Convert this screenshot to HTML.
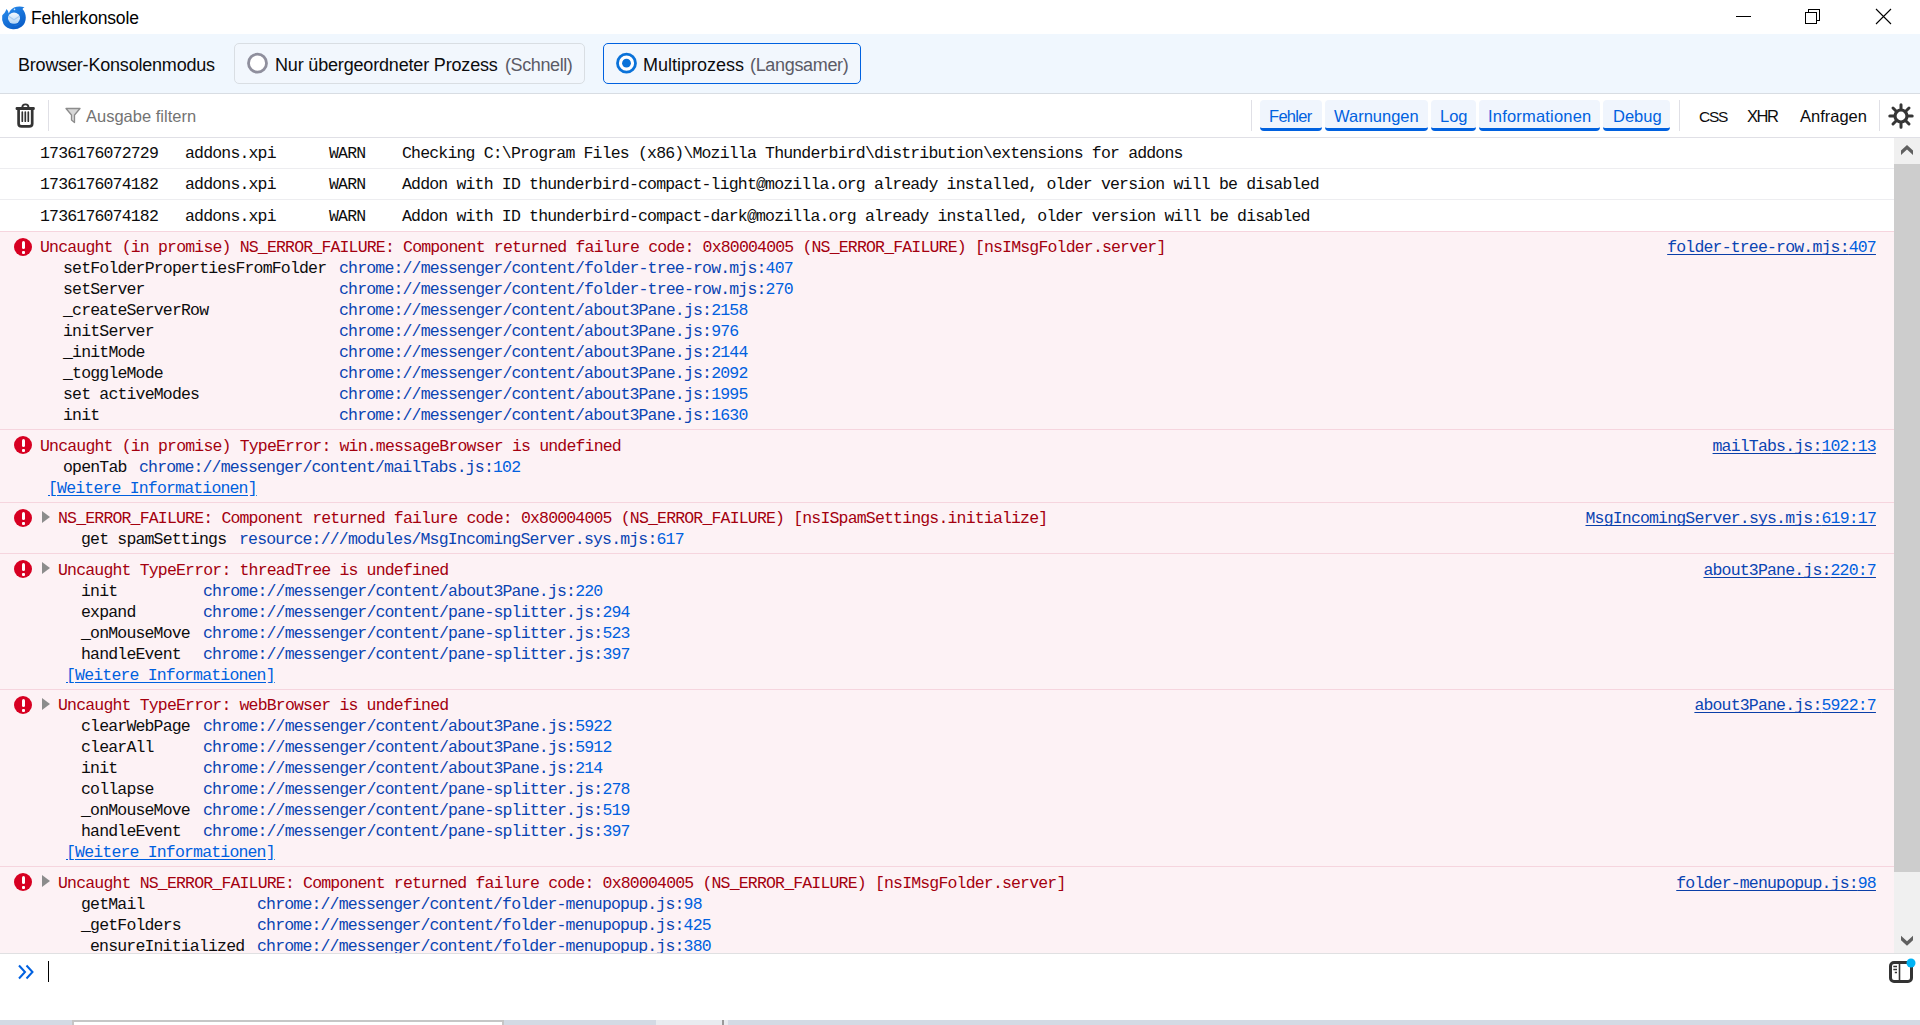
<!DOCTYPE html>
<html><head><meta charset="utf-8"><title>Fehlerkonsole</title><style>
*{margin:0;padding:0;box-sizing:border-box}
html,body{width:1920px;height:1025px;overflow:hidden;background:#fff;position:relative}
body{font-family:'Liberation Sans', sans-serif;color:#0c0c0d}
.a{position:absolute}
.m{position:absolute;font-family:'Liberation Mono', monospace;font-size:16.5px;letter-spacing:-0.825px;line-height:21px;white-space:pre}
.fn{color:#0a44b2}
.ln{color:#0060df}
.rl{text-decoration:underline;text-decoration-color:#0a3fa8;text-underline-offset:2px;text-decoration-skip-ink:none}
.wi{text-decoration:underline;text-underline-offset:2px}
.s{position:absolute;font-family:'Liberation Sans', sans-serif;white-space:pre}
.ei{position:absolute;left:14px;width:18px;height:18px;border-radius:50%;background:#d70022}
.ei::before{content:'';position:absolute;left:7.5px;top:3px;width:3px;height:8px;background:#fff;border-radius:1.5px}
.ei::after{content:'';position:absolute;left:7.5px;top:12.5px;width:3px;height:3px;background:#fff;border-radius:1px}
.tri{position:absolute;left:42px;width:0;height:0;border-left:8px solid #8c8c8c;border-top:6px solid transparent;border-bottom:6px solid transparent}
</style></head><body>
<!-- title bar -->
<div class="a" style="left:0;top:0;width:1920px;height:34px;background:#fff"></div>
<svg class="a" style="left:0px;top:3px" width="30" height="30" viewBox="0 0 30 30">
  <defs>
   <linearGradient id="tb" x1="0" y1="0" x2="0.6" y2="1"><stop offset="0" stop-color="#2a8ff0"/><stop offset="1" stop-color="#0a5ec8"/></linearGradient>
   <linearGradient id="env" x1="0" y1="0" x2="0" y2="1"><stop offset="0" stop-color="#f2f8fe"/><stop offset="1" stop-color="#b5d6f5"/></linearGradient>
  </defs>
  <path d="M6.5 6 Q8.5 8 8.8 10.5 Q10 6.5 14 4.5 Q19 2.5 24.5 4.2 Q23 5 22.5 6 Q25.5 9 25.8 14.5 Q25.8 20.5 21.5 23.8 Q17.5 26.6 13 26.3 Q6.5 26 3.5 21 Q1.5 17.5 2.2 12.5 Q3 11 4.5 10 Q5.5 8.5 6.5 6 Z" fill="url(#tb)"/>
  <ellipse cx="14" cy="15.2" rx="6" ry="5.6" fill="url(#env)"/>
  <path d="M8.6 13.2 L14 16.8 L19.4 13.2" stroke="#a9cdf1" stroke-width="1.1" fill="none"/>
  <path d="M13.5 22 Q18 22.5 21 18.5 Q19.5 22.5 15 23.2 Z" fill="#1a6fd8"/>
  <circle cx="14.5" cy="6.4" r="0.8" fill="#cfe6fb"/>
</svg>
<div class="s" style="left:31px;top:6px;font-size:17.5px;line-height:24px;color:#000;letter-spacing:-0.17px">Fehlerkonsole</div>
<div class="a" style="left:1736px;top:16px;width:15px;height:1px;background:#000"></div>
<div class="a" style="left:1808px;top:9px;width:12px;height:12px;border:1px solid #000;"></div>
<div class="a" style="left:1805px;top:12px;width:12px;height:12px;border:1px solid #000;background:#fff"></div>
<svg class="a" style="left:1875px;top:8px" width="17" height="17" viewBox="0 0 17 17"><path d="M1 1 L16 16 M16 1 L1 16" stroke="#000" stroke-width="1.1"/></svg>

<!-- mode toolbar -->
<div class="a" style="left:0;top:34px;width:1920px;height:59px;background:#f0f7fe"></div>
<div class="a" style="left:0;top:93px;width:1920px;height:1px;background:#d8dde3"></div>
<div class="s" style="left:18px;top:53px;font-size:18px;line-height:24px;letter-spacing:-0.2px">Browser-Konsolenmodus</div>
<div class="a" style="left:234px;top:43px;width:351px;height:41px;border:1px solid #d9dee3;border-radius:5px;background:#f2f7fd"></div>
<svg class="a" style="left:246px;top:52px" width="23" height="23" viewBox="0 0 23 23"><circle cx="11.5" cy="11.2" r="9" fill="#fff" stroke="#8f8f9d" stroke-width="2.8"/></svg>
<div class="s" style="left:275px;top:53px;font-size:18px;line-height:24px;letter-spacing:-0.17px">Nur übergeordneter Prozess</div>
<div class="s" style="left:505px;top:53px;font-size:18px;line-height:24px;color:#5b5b66;letter-spacing:-0.4px">(Schnell)</div>
<div class="a" style="left:603px;top:43px;width:258px;height:41px;border:1.5px solid #0061e0;border-radius:5px;background:#f2f7fd"></div>
<svg class="a" style="left:615px;top:52px" width="23" height="23" viewBox="0 0 23 23"><circle cx="11.5" cy="11.2" r="9" fill="#fff" stroke="#0a72d9" stroke-width="2.8"/><circle cx="11.5" cy="11.2" r="4.4" fill="#0a72d9"/></svg>
<div class="s" style="left:643px;top:53px;font-size:18px;line-height:24px">Multiprozess</div>
<div class="s" style="left:750px;top:53px;font-size:18px;line-height:24px;color:#5b5b66;letter-spacing:-0.33px">(Langsamer)</div>

<!-- filter toolbar -->
<div class="a" style="left:0;top:137px;width:1920px;height:1px;background:#e0e0e6"></div>
<svg class="a" style="left:10px;top:100px" width="30" height="32" viewBox="0 0 30 32">
  <path d="M12.3 7.5 Q12.3 4.4 15.4 4.4 Q18.5 4.4 18.5 7.5" stroke="#333" stroke-width="1.9" fill="none"/>
  <rect x="5.6" y="7" width="19.2" height="2.9" rx="1.2" fill="#333"/>
  <path d="M8.6 9.5 V23.8 Q8.6 26.4 11.6 26.4 H19.2 Q22.2 26.4 22.2 23.8 V9.5" stroke="#333" stroke-width="2.7" fill="none"/>
  <path d="M12.3 12.2 V21.2 M15.3 12.2 V21.2 M18.3 12.2 V21.2" stroke="#333" stroke-width="1.7" stroke-linecap="round"/>
</svg>
<div class="a" style="left:48px;top:100px;width:1px;height:31px;background:#e0e0e6"></div>
<svg class="a" style="left:65px;top:107px" width="16" height="17" viewBox="0 0 16 17">
  <path d="M1 1.5 L15 1.5 L9.5 8 L9.5 15.5 L6.5 13 L6.5 8 Z" fill="#d8d8d8" stroke="#8c8c8c" stroke-width="1.3" stroke-linejoin="round"/>
</svg>
<div class="s" style="left:86px;top:105px;font-size:16.5px;line-height:22px;color:#737373">Ausgabe filtern</div>
<div class="a" style="left:1251px;top:100px;width:1px;height:31px;background:#e0e0e6"></div>
<div class="a" style="left:1260px;top:100px;width:62px;height:31px;background:#f0f5fd;border-radius:4px;border-bottom:3px solid #0061e0"></div>
<div class="s" style="left:1269px;top:105px;font-size:16.5px;line-height:22px;color:#0061e0;letter-spacing:-0.7px">Fehler</div>
<div class="a" style="left:1325px;top:100px;width:103px;height:31px;background:#f0f5fd;border-radius:4px;border-bottom:3px solid #0061e0"></div>
<div class="s" style="left:1334px;top:105px;font-size:16.5px;line-height:22px;color:#0061e0;letter-spacing:0px">Warnungen</div>
<div class="a" style="left:1431px;top:100px;width:45px;height:31px;background:#f0f5fd;border-radius:4px;border-bottom:3px solid #0061e0"></div>
<div class="s" style="left:1440px;top:105px;font-size:16.5px;line-height:22px;color:#0061e0;letter-spacing:0px">Log</div>
<div class="a" style="left:1479px;top:100px;width:121px;height:31px;background:#f0f5fd;border-radius:4px;border-bottom:3px solid #0061e0"></div>
<div class="s" style="left:1488px;top:105px;font-size:16.5px;line-height:22px;color:#0061e0;letter-spacing:0.2px">Informationen</div>
<div class="a" style="left:1603px;top:100px;width:67px;height:31px;background:#f0f5fd;border-radius:4px;border-bottom:3px solid #0061e0"></div>
<div class="s" style="left:1613px;top:105px;font-size:16.5px;line-height:22px;color:#0061e0;letter-spacing:0px">Debug</div>
<div class="a" style="left:1679px;top:100px;width:1px;height:31px;background:#e0e0e6"></div>
<div class="s" style="left:1699px;top:105px;font-size:16.5px;line-height:22px;color:#0c0c0d;letter-spacing:-1.3px;font-size:15.5px;top:106px">CSS</div>
<div class="s" style="left:1747px;top:105px;font-size:16.5px;line-height:22px;color:#0c0c0d;letter-spacing:-1.5px">XHR</div>
<div class="s" style="left:1800px;top:105px;font-size:16.5px;line-height:22px;color:#0c0c0d">Anfragen</div>
<div class="a" style="left:1879px;top:100px;width:1px;height:31px;background:#e0e0e6"></div>
<svg class="a" style="left:1888px;top:103px" width="26" height="26" viewBox="0 0 26 26">
  <g stroke="#363636" stroke-width="3" stroke-linecap="round">
   <path d="M13 1.8 V6 M13 20 V24.2 M1.8 13 H6 M20 13 H24.2 M5 5 L8 8 M18 18 L21 21 M21 5 L18 8 M8 18 L5 21"/>
  </g>
  <circle cx="13" cy="13" r="6" stroke="#363636" stroke-width="3.2" fill="none"/>
</svg>

<!-- output area -->
<div class="a" style="left:0;top:138px;width:1894px;height:815px;background:#fff;overflow:hidden">
</div>
<div class="a" style="left:0;top:168px;width:1894px;height:1px;background:#ededf0"></div>
<div class="a" style="left:0;top:199px;width:1894px;height:1px;background:#ededf0"></div>
<div class="a" style="left:0;top:231px;width:1894px;height:722px;background:#fdf2f5"></div>
<div class="a" style="left:0;top:231px;width:1894px;height:1px;background:#f6d5de"></div>
<div class="a" style="left:0;top:429px;width:1894px;height:1px;background:#f6d5de"></div>
<div class="a" style="left:0;top:502px;width:1894px;height:1px;background:#f6d5de"></div>
<div class="a" style="left:0;top:553px;width:1894px;height:1px;background:#f6d5de"></div>
<div class="a" style="left:0;top:689px;width:1894px;height:1px;background:#f6d5de"></div>
<div class="a" style="left:0;top:866px;width:1894px;height:1px;background:#f6d5de"></div>
<div class="a" style="left:0;top:138px;width:1894px;height:815px;overflow:hidden">
<div class="a" style="left:0;top:-138px;width:1894px;height:1025px">
<div class="m" style="left:40px;top:143px;color:#0c0c0d;">1736176072729</div>
<div class="m" style="left:185px;top:143px;color:#0c0c0d;">addons.xpi</div>
<div class="m" style="left:329px;top:143px;color:#0c0c0d;">WARN</div>
<div class="m" style="left:402px;top:143px;color:#0c0c0d;">Checking C:\Program Files (x86)\Mozilla Thunderbird\distribution\extensions for addons</div>
<div class="m" style="left:40px;top:174px;color:#0c0c0d;">1736176074182</div>
<div class="m" style="left:185px;top:174px;color:#0c0c0d;">addons.xpi</div>
<div class="m" style="left:329px;top:174px;color:#0c0c0d;">WARN</div>
<div class="m" style="left:402px;top:174px;color:#0c0c0d;">Addon with ID thunderbird-compact-light@mozilla.org already installed, older version will be disabled</div>
<div class="m" style="left:40px;top:206px;color:#0c0c0d;">1736176074182</div>
<div class="m" style="left:185px;top:206px;color:#0c0c0d;">addons.xpi</div>
<div class="m" style="left:329px;top:206px;color:#0c0c0d;">WARN</div>
<div class="m" style="left:402px;top:206px;color:#0c0c0d;">Addon with ID thunderbird-compact-dark@mozilla.org already installed, older version will be disabled</div>
<div class="ei" style="top:238px"></div>
<div class="m" style="left:40px;top:237px;color:#a4000f;">Uncaught (in promise) NS_ERROR_FAILURE: Component returned failure code: 0x80004005 (NS_ERROR_FAILURE) [nsIMsgFolder.server]</div>
<div class="m rl" style="left:1667.18px;top:237px;"><span class="fn">folder-tree-row.mjs:</span><span class="ln">407</span></div>
<div class="m" style="left:63px;top:258px;color:#0c0c0d;">setFolderPropertiesFromFolder</div>
<div class="m" style="left:339px;top:258px;color:#0c0c0d;"><span class="fn">chrome://messenger/content/folder-tree-row.mjs:</span><span class="ln">407</span></div>
<div class="m" style="left:63px;top:279px;color:#0c0c0d;">setServer</div>
<div class="m" style="left:339px;top:279px;color:#0c0c0d;"><span class="fn">chrome://messenger/content/folder-tree-row.mjs:</span><span class="ln">270</span></div>
<div class="m" style="left:63px;top:300px;color:#0c0c0d;">_createServerRow</div>
<div class="m" style="left:339px;top:300px;color:#0c0c0d;"><span class="fn">chrome://messenger/content/about3Pane.js:</span><span class="ln">2158</span></div>
<div class="m" style="left:63px;top:321px;color:#0c0c0d;">initServer</div>
<div class="m" style="left:339px;top:321px;color:#0c0c0d;"><span class="fn">chrome://messenger/content/about3Pane.js:</span><span class="ln">976</span></div>
<div class="m" style="left:63px;top:342px;color:#0c0c0d;">_initMode</div>
<div class="m" style="left:339px;top:342px;color:#0c0c0d;"><span class="fn">chrome://messenger/content/about3Pane.js:</span><span class="ln">2144</span></div>
<div class="m" style="left:63px;top:363px;color:#0c0c0d;">_toggleMode</div>
<div class="m" style="left:339px;top:363px;color:#0c0c0d;"><span class="fn">chrome://messenger/content/about3Pane.js:</span><span class="ln">2092</span></div>
<div class="m" style="left:63px;top:384px;color:#0c0c0d;">set activeModes</div>
<div class="m" style="left:339px;top:384px;color:#0c0c0d;"><span class="fn">chrome://messenger/content/about3Pane.js:</span><span class="ln">1995</span></div>
<div class="m" style="left:63px;top:405px;color:#0c0c0d;">init</div>
<div class="m" style="left:339px;top:405px;color:#0c0c0d;"><span class="fn">chrome://messenger/content/about3Pane.js:</span><span class="ln">1630</span></div>
<div class="ei" style="top:436px"></div>
<div class="m" style="left:40px;top:436px;color:#a4000f;">Uncaught (in promise) TypeError: win.messageBrowser is undefined</div>
<div class="m rl" style="left:1712.55px;top:436px;"><span class="fn">mailTabs.js:</span><span class="ln">102:13</span></div>
<div class="m" style="left:63px;top:457px;color:#0c0c0d;">openTab</div>
<div class="m" style="left:139px;top:457px;color:#0c0c0d;"><span class="fn">chrome://messenger/content/mailTabs.js:</span><span class="ln">102</span></div>
<div class="m wi" style="left:48px;top:478px;color:#0060df;">[Weitere Informationen]</div>
<div class="ei" style="top:509px"></div>
<div class="tri" style="top:511px"></div>
<div class="m" style="left:58px;top:508px;color:#a4000f;">NS_ERROR_FAILURE: Component returned failure code: 0x80004005 (NS_ERROR_FAILURE) [nsISpamSettings.initialize]</div>
<div class="m rl" style="left:1585.50px;top:508px;"><span class="fn">MsgIncomingServer.sys.mjs:</span><span class="ln">619:17</span></div>
<div class="m" style="left:81px;top:529px;color:#0c0c0d;">get spamSettings</div>
<div class="m" style="left:239px;top:529px;color:#0c0c0d;"><span class="fn">resource:///modules/MsgIncomingServer.sys.mjs:</span><span class="ln">617</span></div>
<div class="ei" style="top:560px"></div>
<div class="tri" style="top:562px"></div>
<div class="m" style="left:58px;top:560px;color:#a4000f;">Uncaught TypeError: threadTree is undefined</div>
<div class="m rl" style="left:1703.48px;top:560px;"><span class="fn">about3Pane.js:</span><span class="ln">220:7</span></div>
<div class="m" style="left:81px;top:581px;color:#0c0c0d;">init</div>
<div class="m" style="left:203px;top:581px;color:#0c0c0d;"><span class="fn">chrome://messenger/content/about3Pane.js:</span><span class="ln">220</span></div>
<div class="m" style="left:81px;top:602px;color:#0c0c0d;">expand</div>
<div class="m" style="left:203px;top:602px;color:#0c0c0d;"><span class="fn">chrome://messenger/content/pane-splitter.js:</span><span class="ln">294</span></div>
<div class="m" style="left:81px;top:623px;color:#0c0c0d;">_onMouseMove</div>
<div class="m" style="left:203px;top:623px;color:#0c0c0d;"><span class="fn">chrome://messenger/content/pane-splitter.js:</span><span class="ln">523</span></div>
<div class="m" style="left:81px;top:644px;color:#0c0c0d;">handleEvent</div>
<div class="m" style="left:203px;top:644px;color:#0c0c0d;"><span class="fn">chrome://messenger/content/pane-splitter.js:</span><span class="ln">397</span></div>
<div class="m wi" style="left:66px;top:665px;color:#0060df;">[Weitere Informationen]</div>
<div class="ei" style="top:696px"></div>
<div class="tri" style="top:698px"></div>
<div class="m" style="left:58px;top:695px;color:#a4000f;">Uncaught TypeError: webBrowser is undefined</div>
<div class="m rl" style="left:1694.40px;top:695px;"><span class="fn">about3Pane.js:</span><span class="ln">5922:7</span></div>
<div class="m" style="left:81px;top:716px;color:#0c0c0d;">clearWebPage</div>
<div class="m" style="left:203px;top:716px;color:#0c0c0d;"><span class="fn">chrome://messenger/content/about3Pane.js:</span><span class="ln">5922</span></div>
<div class="m" style="left:81px;top:737px;color:#0c0c0d;">clearAll</div>
<div class="m" style="left:203px;top:737px;color:#0c0c0d;"><span class="fn">chrome://messenger/content/about3Pane.js:</span><span class="ln">5912</span></div>
<div class="m" style="left:81px;top:758px;color:#0c0c0d;">init</div>
<div class="m" style="left:203px;top:758px;color:#0c0c0d;"><span class="fn">chrome://messenger/content/about3Pane.js:</span><span class="ln">214</span></div>
<div class="m" style="left:81px;top:779px;color:#0c0c0d;">collapse</div>
<div class="m" style="left:203px;top:779px;color:#0c0c0d;"><span class="fn">chrome://messenger/content/pane-splitter.js:</span><span class="ln">278</span></div>
<div class="m" style="left:81px;top:800px;color:#0c0c0d;">_onMouseMove</div>
<div class="m" style="left:203px;top:800px;color:#0c0c0d;"><span class="fn">chrome://messenger/content/pane-splitter.js:</span><span class="ln">519</span></div>
<div class="m" style="left:81px;top:821px;color:#0c0c0d;">handleEvent</div>
<div class="m" style="left:203px;top:821px;color:#0c0c0d;"><span class="fn">chrome://messenger/content/pane-splitter.js:</span><span class="ln">397</span></div>
<div class="m wi" style="left:66px;top:842px;color:#0060df;">[Weitere Informationen]</div>
<div class="ei" style="top:873px"></div>
<div class="tri" style="top:875px"></div>
<div class="m" style="left:58px;top:873px;color:#a4000f;">Uncaught NS_ERROR_FAILURE: Component returned failure code: 0x80004005 (NS_ERROR_FAILURE) [nsIMsgFolder.server]</div>
<div class="m rl" style="left:1676.25px;top:873px;"><span class="fn">folder-menupopup.js:</span><span class="ln">98</span></div>
<div class="m" style="left:81px;top:894px;color:#0c0c0d;">getMail</div>
<div class="m" style="left:257px;top:894px;color:#0c0c0d;"><span class="fn">chrome://messenger/content/folder-menupopup.js:</span><span class="ln">98</span></div>
<div class="m" style="left:81px;top:915px;color:#0c0c0d;">_getFolders</div>
<div class="m" style="left:257px;top:915px;color:#0c0c0d;"><span class="fn">chrome://messenger/content/folder-menupopup.js:</span><span class="ln">425</span></div>
<div class="m" style="left:90px;top:936px;color:#0c0c0d;">ensureInitialized</div>
<div class="m" style="left:257px;top:936px;color:#0c0c0d;"><span class="fn">chrome://messenger/content/folder-menupopup.js:</span><span class="ln">380</span></div>
</div></div>
<!-- scrollbar -->
<div class="a" style="left:1894px;top:138px;width:26px;height:815px;background:#f0f0f0"></div>
<div class="a" style="left:1894px;top:164px;width:26px;height:708px;background:#cdcdcd"></div>
<svg class="a" style="left:1900px;top:144px" width="14" height="12" viewBox="0 0 14 12"><path d="M1 6.6 L7 1 L13 6.6 L13 11 L7 5.6 L1 11 Z" fill="#606060"/></svg>
<svg class="a" style="left:1900px;top:935px" width="14" height="12" viewBox="0 0 14 12"><path d="M1 5.2 L7 10.8 L13 5.2 L13 0.8 L7 6.2 L1 0.8 Z" fill="#606060"/></svg>

<!-- input -->
<div class="a" style="left:0;top:953px;width:1920px;height:1px;background:#e0e0e2"></div>
<svg class="a" style="left:17px;top:964px" width="18" height="16" viewBox="0 0 18 16"><path d="M2 1.5 L8 8 L2 14.5 M9.5 1.5 L15.5 8 L9.5 14.5" stroke="#0061e0" stroke-width="2" fill="none"/></svg>
<div class="a" style="left:48px;top:961px;width:1px;height:21px;background:#000"></div>
<svg class="a" style="left:1887px;top:957px" width="30" height="28" viewBox="0 0 30 28">
  <rect x="3.5" y="5.5" width="21" height="19" rx="3.5" stroke="#333" stroke-width="3" fill="none"/>
  <path d="M12.5 6 V24" stroke="#333" stroke-width="1.6"/>
  <path d="M6.3 9.5 H10 M6.3 12.5 H10 M7.8 15.5 H10" stroke="#333" stroke-width="1.4"/>
  <circle cx="24" cy="6" r="4.5" fill="#00b3f4"/>
</svg>
<!-- bottom strip -->
<div class="a" style="left:0;top:1020px;width:1920px;height:5px;background:#d3dae4"></div>
<div class="a" style="left:72px;top:1020px;width:432px;height:5px;background:#fff;border-top:2px solid #c6c6c6;border-left:2px solid #c6c6c6;border-right:2px solid #c6c6c6"></div>
<div class="a" style="left:656px;top:1020px;width:66px;height:5px;background:#e9ecf0"></div>
<div class="a" style="left:722px;top:1020px;width:2px;height:5px;background:#9a9a9a"></div>
<div class="a" style="left:724px;top:1020px;width:4px;height:5px;background:#e9ecf0"></div>
</body></html>
